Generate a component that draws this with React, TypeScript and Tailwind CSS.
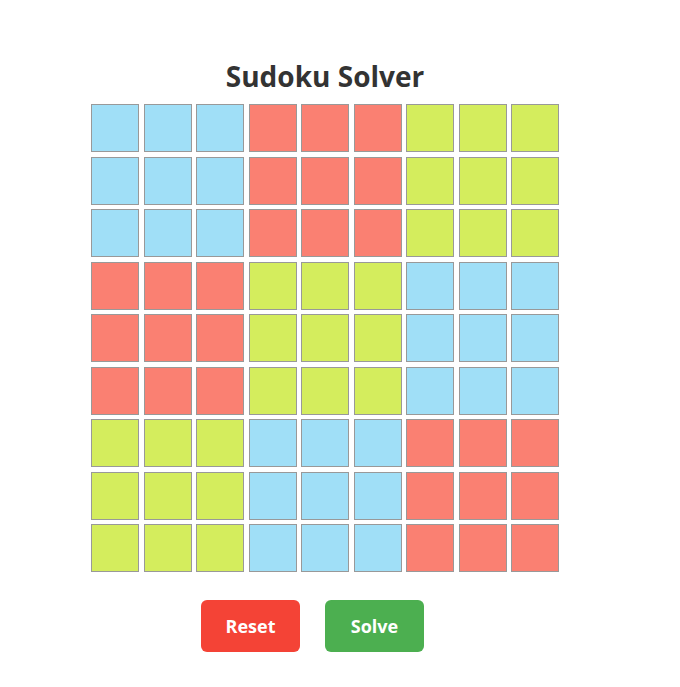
import React from "react";

const blockColors = [
  ["bg-[#a0dff7]", "bg-[#fa8072]", "bg-[#d4ed5d]"],
  ["bg-[#fa8072]", "bg-[#d4ed5d]", "bg-[#a0dff7]"],
  ["bg-[#d4ed5d]", "bg-[#a0dff7]", "bg-[#fa8072]"],
];

export default function App() {
  const cells = [];
  for (let r = 0; r < 9; r++) {
    for (let c = 0; c < 9; c++) {
      const color = blockColors[Math.floor(r / 3)][Math.floor(c / 3)];
      cells.push(
        <div
          key={`${r}-${c}`}
          className={`w-[48px] h-[48px] border border-[#999999] ${color}`}
        />
      );
    }
  }

  return (
    <div className="min-h-[687px] bg-white font-['Open_Sans',sans-serif]">
      <div className="w-[650px] flex flex-col items-center pt-[57px]">
        <h1 className="text-[28px] leading-[38px] font-bold text-[#333333] mb-[9px]">
          Sudoku Solver
        </h1>
        <div className="grid grid-cols-[repeat(9,48px)] gap-[4.5px]">
          {cells}
        </div>
        <div className="flex mt-[28px]">
          <button className="w-[99px] h-[52px] mr-[25px] rounded-md bg-[#f44336] text-white text-[18px] font-bold">
            Reset
          </button>
          <button className="w-[99px] h-[52px] mr-[25px] rounded-md bg-[#4caf50] text-white text-[18px] font-bold">
            Solve
          </button>
        </div>
      </div>
    </div>
  );
}
